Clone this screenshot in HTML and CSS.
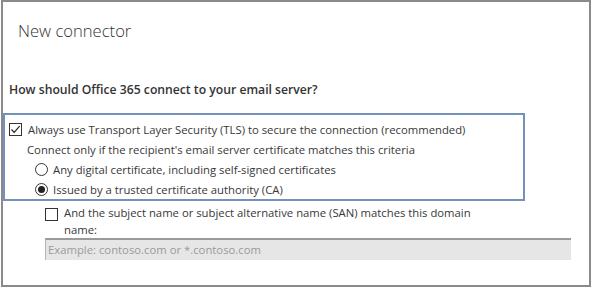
FILE: index.html
```html
<!DOCTYPE html>
<html lang="en">
<head>
  <meta charset="UTF-8" />
  <title>New connector</title>
  <link rel="stylesheet" href="styles.css">
</head>
<body>
  <div class="dialog">
    <div class="title">New connector</div>
    <div class="question">How should Office 365 connect to your email server?</div>

    <div class="tls-box">
      <label class="row">
        <span class="checkbox">
          <svg width="11" height="11" viewBox="0 0 11 11"><path d="M1.5 5.5 L4.2 8.3 L9.6 2.2" fill="none" stroke="#222" stroke-width="1.2"/></svg>
        </span>
        Always use Transport Layer Security (TLS) to secure the connection (recommended)
      </label>
      <div class="row hint">Connect only if the recipient's email server certificate matches this criteria</div>
      <label class="row option">
        <span class="radio"></span>
        Any digital certificate, including self-signed certificates
      </label>
      <label class="row option">
        <span class="radio on"></span>
        Issued by a trusted certificate authority (CA)
      </label>
    </div>

    <div class="san">
      <label class="san-row">
        <span class="checkbox"></span>
        <span class="san-text">And the subject name or subject alternative name (SAN) matches this domain name:</span>
      </label>
      <div class="domain-input">Example: contoso.com or *.contoso.com</div>
    </div>
  </div>
</body>
</html>
```

FILE: styles.css
```css
body {
  margin: 0;
  background: #fff;
  font-family: "Open Sans", "Noto Sans", sans-serif;
  color: #383838;
}

.dialog {
  margin-left: 1px;
  width: 586px;
  height: 283px;
  border: 2px solid #8a8a8a;
  background: #fff;
}

.title {
  margin: 17px 0 0 15px;
  font-size: 16.6px;
  font-weight: 300;
  line-height: 24px;
  color: #333;
}

.question {
  margin: 38px 0 0 6px;
  font-size: 12.2px;
  font-weight: 600;
  line-height: 18px;
  color: #333;
}

.tls-box {
  margin-top: 14px;
  width: 514px;
  border: 2px solid #7391bb;
  padding: 4px 0 0 4px;
  font-size: 11.3px;
}

.row {
  display: flex;
  align-items: center;
  height: 20px;
  gap: 6px;
}

.hint {
  padding-left: 18px;
}

.option {
  padding-left: 26px;
  gap: 5px;
}

.checkbox {
  display: flex;
  align-items: center;
  justify-content: center;
  flex: none;
  width: 11px;
  height: 11px;
  border: 1px solid #333;
  background: #fff;
}

.radio {
  flex: none;
  width: 11px;
  height: 11px;
  border: 1px solid #333;
  border-radius: 50%;
  position: relative;
}

.radio.on::after {
  content: "";
  position: absolute;
  left: 2px;
  top: 2px;
  width: 7px;
  height: 7px;
  border-radius: 50%;
  background: #222;
}

.san {
  margin-left: 42px;
  font-size: 11.3px;
}

.san-row {
  display: flex;
  gap: 6px;
  margin-top: 3px;
}

.san-row .checkbox {
  margin-top: 4px;
}

.san-text {
  width: 420px;
  line-height: 17px;
}

.domain-input {
  width: 523px;
  height: 20px;
  line-height: 20px;
  padding-left: 2px;
  background: #e6e6e6;
  border-top: 2px solid #9a9a9a;
  border-left: 1px solid #b4b4b4;
  color: #9a9a9a;
}
```
